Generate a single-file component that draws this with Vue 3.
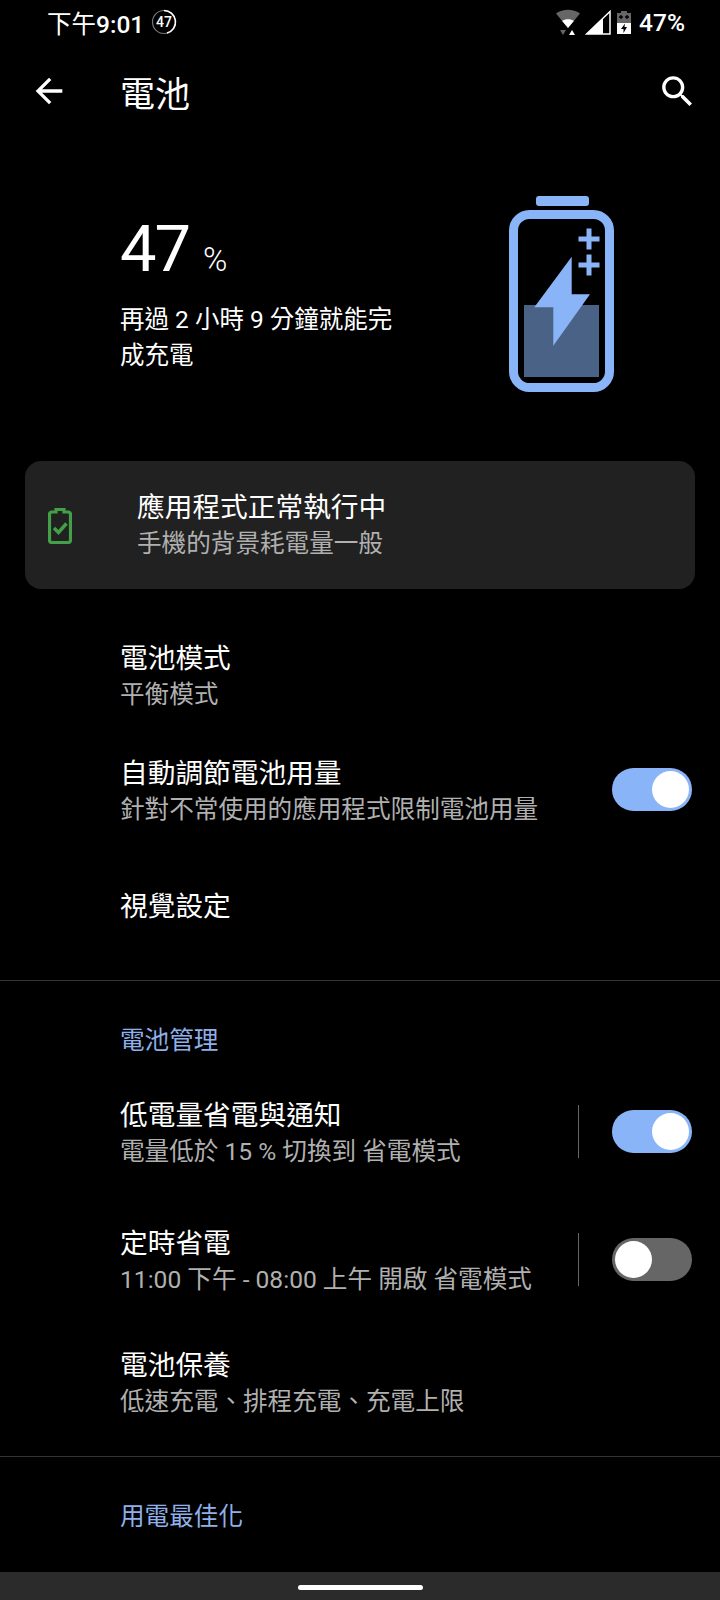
<script setup>
const groupOne = [
  { title: "電池模式", sub: "平衡模式" },
  { title: "自動調節電池用量", sub: "針對不常使用的應用程式限制電池用量", toggle: "on" },
  { title: "視覺設定" }
];

const groupTwo = [
  { title: "低電量省電與通知", sub: "電量低於 15 % 切換到 省電模式", toggle: "on", split: true },
  { title: "定時省電", sub: "11:00 下午 - 08:00 上午 開啟 省電模式", toggle: "off", split: true },
  { title: "電池保養", sub: "低速充電、排程充電、充電上限" }
];
</script>

<template>
  <div class="page">
    <div class="status">
      <div class="status-left">
        <span><span class="status-cjk">下午</span>9:01</span>
        <svg class="ring" width="26" height="26" viewBox="0 0 26 26">
          <circle cx="13" cy="13" r="11.5" fill="none" stroke="#777" stroke-width="1.2" />
          <path d="M13 1.5A11.5 11.5 0 0 1 16 24.1" fill="none" stroke="#fff" stroke-width="1.6" />
          <text x="13" y="18" text-anchor="middle" class="ring-text">47</text>
        </svg>
      </div>
      <div class="status-right">
        <svg width="26" height="26" viewBox="0 0 26 26">
          <path d="M1 4.5C8 -0.5 18 -0.5 25 4.5L13 19Z" fill="#666" />
          <path d="M7 11.8C10.5 9.6 15.5 9.6 19 11.8L13 19Z" fill="#fff" />
          <path d="M5 21H11L8 26Z" fill="#666" />
          <path d="M14 26H20L17 21Z" fill="#fff" />
        </svg>
        <svg class="signal" width="26" height="25" viewBox="0 0 26 25">
          <path d="M25 1.5V24H1.5Z" fill="none" stroke="#fff" stroke-width="1.5" />
          <path d="M18 8V24H1.5Z" fill="#fff" />
        </svg>
        <svg class="mini-batt" width="14" height="23" viewBox="0 0 14 23">
          <path d="M4 0H10V2H14V23H0V2H4Z" fill="#666" />
          <path d="M0 12H14V23H0Z" fill="#fff" />
          <path d="M2 6H6M4 4V8M8 6H12M10 4V8" stroke="#000" stroke-width="1.4" />
          <path d="M8 12.5L4 18H6.5V22L10 16H7.5Z" fill="#000" />
        </svg>
        <span class="status-pct">47%</span>
      </div>
    </div>

    <header class="bar">
      <svg class="back" width="40" height="40" viewBox="0 0 24 24" fill="#fff">
        <path d="M20 11H7.83l5.59-5.59L12 4l-8 8 8 8 1.41-1.41L7.83 13H20v-2z" />
      </svg>
      <h1 class="title">電池</h1>
      <svg class="search" width="41" height="41" viewBox="0 0 24 24" fill="#fff">
        <path d="M15.5 14h-.79l-.28-.27C15.41 12.59 16 11.11 16 9.5 16 5.91 13.09 3 9.5 3S3 5.91 3 9.5 5.91 16 9.5 16c1.61 0 3.09-.59 4.23-1.57l.27.28v.79l5 4.99L20.49 19l-4.99-5zm-6 0C7.01 14 5 11.99 5 9.5S7.01 5 9.5 5 14 7.01 14 9.5 11.99 14 9.5 14z" />
      </svg>
    </header>

    <section class="hero">
      <div class="hero-text">
        <div class="level"><span class="level-num">47</span><span class="level-unit">%</span></div>
        <p class="eta">再過 2 小時 9 分鐘就能完成充電</p>
      </div>
      <svg class="hero-batt" width="105" height="196" viewBox="508 196 105 196">
        <rect x="535" y="196" width="53" height="10" rx="3" fill="#8ab4f8" />
        <rect x="512.5" y="214.5" width="96" height="173" rx="16" fill="none" stroke="#8ab4f8" stroke-width="9" />
        <rect x="523" y="305" width="75" height="72" fill="#4a6285" />
        <path d="M570.7 256.7L533.3 307.3H552.3V345.7L589 294.3H570.7Z" fill="#8ab4f8" />
        <path d="M577.5 239H598.5M588 228.5V249.5M577.5 265H598.5M588 254.5V275.5" stroke="#8ab4f8" stroke-width="5" fill="none" />
      </svg>
    </section>

    <div class="card">
      <svg class="card-icon" width="24" height="36" viewBox="0 0 24 36">
        <path d="M8 4V1.5H16V4H20A2.5 2.5 0 0 1 22.5 6.500V32A2.500 2.500 0 0 1 20 34.500H4A2.500 2.500 0 0 1 1.500 32V6.500A2.500 2.500 0 0 1 4 4Z" fill="none" stroke="#43a047" stroke-width="3.200" />
        <path d="M6 20L10.500 24.500L18.500 15.500" fill="none" stroke="#43a047" stroke-width="3.400" />
      </svg>
      <div class="row-text">
        <div class="row-title">應用程式正常執行中</div>
        <div class="row-sub">手機的背景耗電量一般</div>
      </div>
    </div>

    <div class="group group-one">
      <div v-for="item in groupOne" :key="item.title" class="row">
        <div class="row-text">
          <div class="row-title">{{ item.title }}</div>
          <div v-if="item.sub" class="row-sub">{{ item.sub }}</div>
        </div>
        <span v-if="item.toggle" class="toggle" :class="item.toggle"><i></i></span>
      </div>
    </div>

    <hr class="line first-line" />
    <div class="heading">電池管理</div>

    <div class="group">
      <div v-for="item in groupTwo" :key="item.title" class="row wide">
        <div class="row-text">
          <div class="row-title">{{ item.title }}</div>
          <div class="row-sub">{{ item.sub }}</div>
        </div>
        <span v-if="item.split" class="split"></span>
        <span v-if="item.toggle" class="toggle" :class="item.toggle"><i></i></span>
      </div>
    </div>

    <hr class="line second-line" />
    <div class="heading">用電最佳化</div>

    <div class="nav"><span class="pill"></span></div>
  </div>
</template>

<style scoped>
* {
  margin: 0;
  padding: 0;
  box-sizing: border-box;
}

.page {
  width: 720px;
  height: 1600px;
  display: flex;
  flex-direction: column;
  overflow: hidden;
  background: #000;
  color: #fff;
  font-family: Roboto, "Noto Sans CJK TC", sans-serif;
}

.page > * {
  flex-shrink: 0;
}

.status {
  height: 44px;
  display: flex;
  align-items: center;
  justify-content: space-between;
  padding: 0 35px 0 47px;
  font-size: 24.5px;
  font-weight: 500;
}

.status-cjk {
  font-weight: 400;
}

.status-left,
.status-right {
  display: flex;
  align-items: center;
}

.ring {
  margin-left: 7px;
}

.ring-text {
  fill: #fff;
  font-size: 14px;
  font-weight: 500;
  font-family: Roboto, sans-serif;
}

.signal {
  margin-left: 4px;
}

.mini-batt {
  margin-left: 6px;
}

.status-pct {
  margin-left: 8px;
}

.bar {
  height: 94px;
  display: flex;
  align-items: center;
  padding: 0 22px 0 29px;
}

.title {
  flex: 1;
  margin-left: 51px;
  font-size: 35px;
  font-weight: 400;
}

.hero {
  height: 323px;
  display: flex;
  justify-content: space-between;
  padding: 58px 106px 0 120px;
}

.hero-text {
  width: 280px;
  padding-top: 10px;
}

.level {
  display: flex;
  align-items: baseline;
  height: 96px;
}

.level-num {
  font-size: 65px;
  line-height: 86px;
  letter-spacing: -2px;
}

.level-unit {
  margin-left: 14px;
  font-size: 33px;
  font-weight: 300;
}

.eta {
  font-size: 24.5px;
  line-height: 36px;
}

.card {
  height: 128px;
  margin: 0 25px;
  padding: 2px 0 0 23px;
  display: flex;
  align-items: center;
  gap: 65px;
  background: #212121;
  border-radius: 16px;
}

.group-one {
  margin-top: 30px;
}

.row {
  height: 115px;
  display: flex;
  align-items: center;
  padding: 0 28px 0 120px;
}

.row.wide {
  height: 125px;
}

.row.wide:nth-child(1) {
  height: 130px;
}

.row.wide:nth-child(3) {
  height: 120px;
}

.row-text {
  flex: 1;
}

.row-title {
  font-size: 27.7px;
  line-height: 36px;
}

.row-sub {
  font-size: 24.6px;
  line-height: 36px;
  color: #b0b0b0;
}

.toggle {
  width: 80px;
  height: 43px;
  margin-bottom: 5px;
  display: flex;
  align-items: center;
  padding: 0 3px;
  border-radius: 22px;
  background: #666;
}

.toggle.on {
  justify-content: flex-end;
  background: #8ab4f8;
}

.toggle i {
  width: 37px;
  height: 37px;
  border-radius: 50%;
  background: #fff;
}

.split {
  width: 1px;
  height: 53px;
  margin: 0 33px 5px 0;
  background: #666;
}

.line {
  height: 1px;
  border: 0;
  background: #333;
}

.first-line {
  margin-top: 16px;
}

.second-line {
  margin-top: 12px;
}

.heading {
  height: 88px;
  padding: 42px 0 0 120px;
  font-size: 24.6px;
  line-height: 36px;
  color: #8fb0ea;
}

.nav {
  margin-top: auto;
  height: 28px;
  display: flex;
  justify-content: center;
  padding-top: 13px;
  background: #2b2b2b;
}

.pill {
  width: 125px;
  height: 5px;
  border-radius: 3px;
  background: #fff;
}
</style>

<style>
body {
  background: #000;
}
</style>
